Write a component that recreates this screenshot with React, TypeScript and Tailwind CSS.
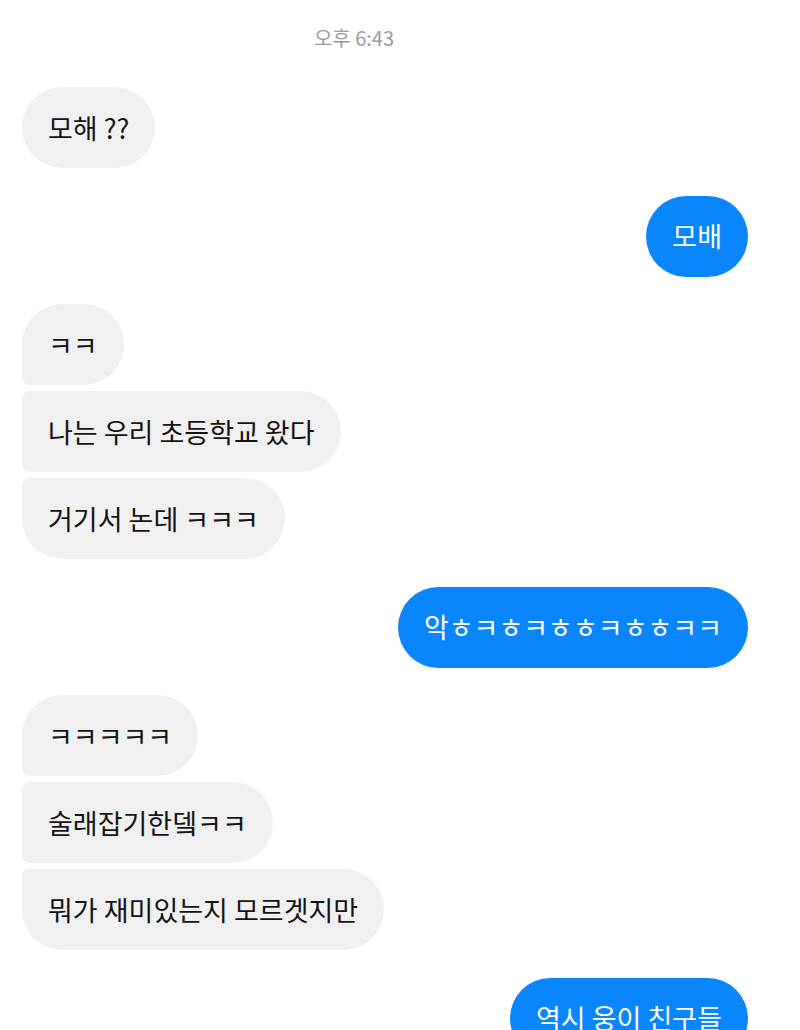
import React from 'react';

type Msg = { text: string; mine: boolean };

const groups: Msg[][] = [
  [{ text: '모해 ??', mine: false }],
  [{ text: '모배', mine: true }],
  [
    { text: 'ㅋㅋ', mine: false },
    { text: '나는 우리 초등학교 왔다', mine: false },
    { text: '거기서 논데 ㅋㅋㅋ', mine: false },
  ],
  [{ text: '악ㅎㅋㅎㅋㅎㅎㅋㅎㅎㅋㅋ', mine: true }],
  [
    { text: 'ㅋㅋㅋㅋㅋ', mine: false },
    { text: '술래잡기한뎈ㅋㅋ', mine: false },
    { text: '뭐가 재미있는지 모르겟지만', mine: false },
  ],
  [{ text: '역시 웅이 친구들', mine: true }],
];

// corner shape for a bubble depending on its place in a run of messages
function cornerClass(mine: boolean, idx: number, count: number) {
  if (count === 1) return 'rounded-[41px]';
  const first = idx === 0;
  const last = idx === count - 1;
  if (mine) {
    if (first) return 'rounded-l-[41px] rounded-tr-[41px] rounded-br-[8px]';
    if (last) return 'rounded-l-[41px] rounded-br-[41px] rounded-tr-[8px]';
    return 'rounded-l-[41px] rounded-r-[8px]';
  }
  if (first) return 'rounded-r-[41px] rounded-tl-[41px] rounded-bl-[8px]';
  if (last) return 'rounded-r-[41px] rounded-bl-[41px] rounded-tl-[8px]';
  return 'rounded-r-[41px] rounded-l-[8px]';
}

const Bubble: React.FC<{ msg: Msg; idx: number; count: number }> = ({ msg, idx, count }) => (
  <div className={`flex ${msg.mine ? 'justify-end' : 'justify-start'}`}>
    <div
      className={`h-[81px] flex items-center px-[26px] text-[27px] leading-[36px] whitespace-nowrap ${cornerClass(
        msg.mine,
        idx,
        count
      )} ${msg.mine ? 'bg-[#0a86fd] text-white' : 'bg-[#f0f0f0] text-[#141414]'}`}
    >
      {msg.text}
    </div>
  </div>
);

export default function App() {
  return (
    <div
      className="w-[800px] h-[1030px] overflow-hidden bg-white"
      style={{ fontFamily: '"Noto Sans CJK KR", "Noto Sans", sans-serif' }}
    >
      <div className="pt-[24px] pr-[92px] text-center text-[20px] leading-[28px] text-[#9b9b9b]">
        오후 6:43
      </div>
      <div className="pl-[22px] pr-[52px] pt-[35px] flex flex-col gap-[27.5px]">
        {groups.map((g, gi) => (
          <div key={gi} className="flex flex-col gap-[6px]">
            {g.map((m, i) => (
              <Bubble key={i} msg={m} idx={i} count={g.length} />
            ))}
          </div>
        ))}
      </div>
    </div>
  );
}
